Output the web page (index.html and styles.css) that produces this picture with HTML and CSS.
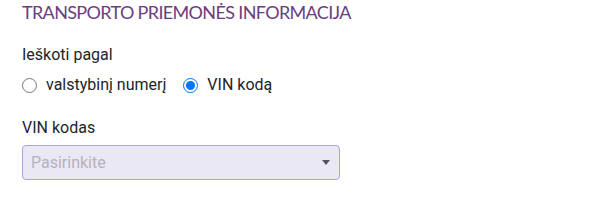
FILE: index.html
```html
<!DOCTYPE html>
<html lang="lt">
<head>
    <meta charset="UTF-8">
    <title>Transporto priemonės informacija</title>
    <link rel="stylesheet" href="styles.css">
</head>
<body>
    <div class="container">
        <h2 class="section-title">TRANSPORTO PRIEMONĖS INFORMACIJA</h2>

        <div class="field">
            <div class="field-label">Ieškoti pagal</div>
            <div class="radio-row">
                <label class="radio"><input type="radio" name="search" value="plate"> valstybinį numerį</label>
                <label class="radio"><input type="radio" name="search" value="vin" checked> VIN kodą</label>
            </div>
        </div>

        <div class="field">
            <div class="field-label">VIN kodas</div>
            <div class="select-box">
                <span class="placeholder">Pasirinkite</span>
                <span class="caret"></span>
            </div>
        </div>
    </div>
</body>
</html>
```

FILE: styles.css
```css
body {
    margin: 0;
    padding: 0;
    background-color: #fff;
    font-family: Roboto, "Liberation Sans", Arial, sans-serif;
    color: #212529;
}
.container {
    padding: 0 22px;
}
.section-title {
    font-family: Lato, "Open Sans", sans-serif;
    font-weight: 400;
    font-size: 18px;
    color: #6a3e80;
    margin: 0;
    padding-top: 1px;
    line-height: 22px;
    letter-spacing: -0.65px;
}
.field {
    margin-top: 22px;
}
.field:last-child {
    margin-top: 23px;
}
.field-label {
    font-size: 16px;
    line-height: 20px;
}
.radio-row {
    display: flex;
    gap: 17px;
    margin-top: 10px;
}
.radio {
    display: flex;
    align-items: center;
    font-size: 16px;
    line-height: 20px;
}
.radio input {
    margin: 0 9px 0 0;
    width: 15px;
    height: 15px;
}
.select-box {
    margin-top: 7px;
    width: 318px;
    height: 35px;
    box-sizing: border-box;
    background-color: #ebe8f6;
    border: 1px solid #ada2d6;
    border-radius: 4px;
    display: flex;
    align-items: center;
    justify-content: space-between;
    padding: 0 9px 0 8px;
}
.placeholder {
    color: #b5b2bd;
    font-size: 16px;
}
.caret {
    width: 0;
    height: 0;
    border-left: 4px solid transparent;
    border-right: 4px solid transparent;
    border-top: 5px solid #555;
}
```
